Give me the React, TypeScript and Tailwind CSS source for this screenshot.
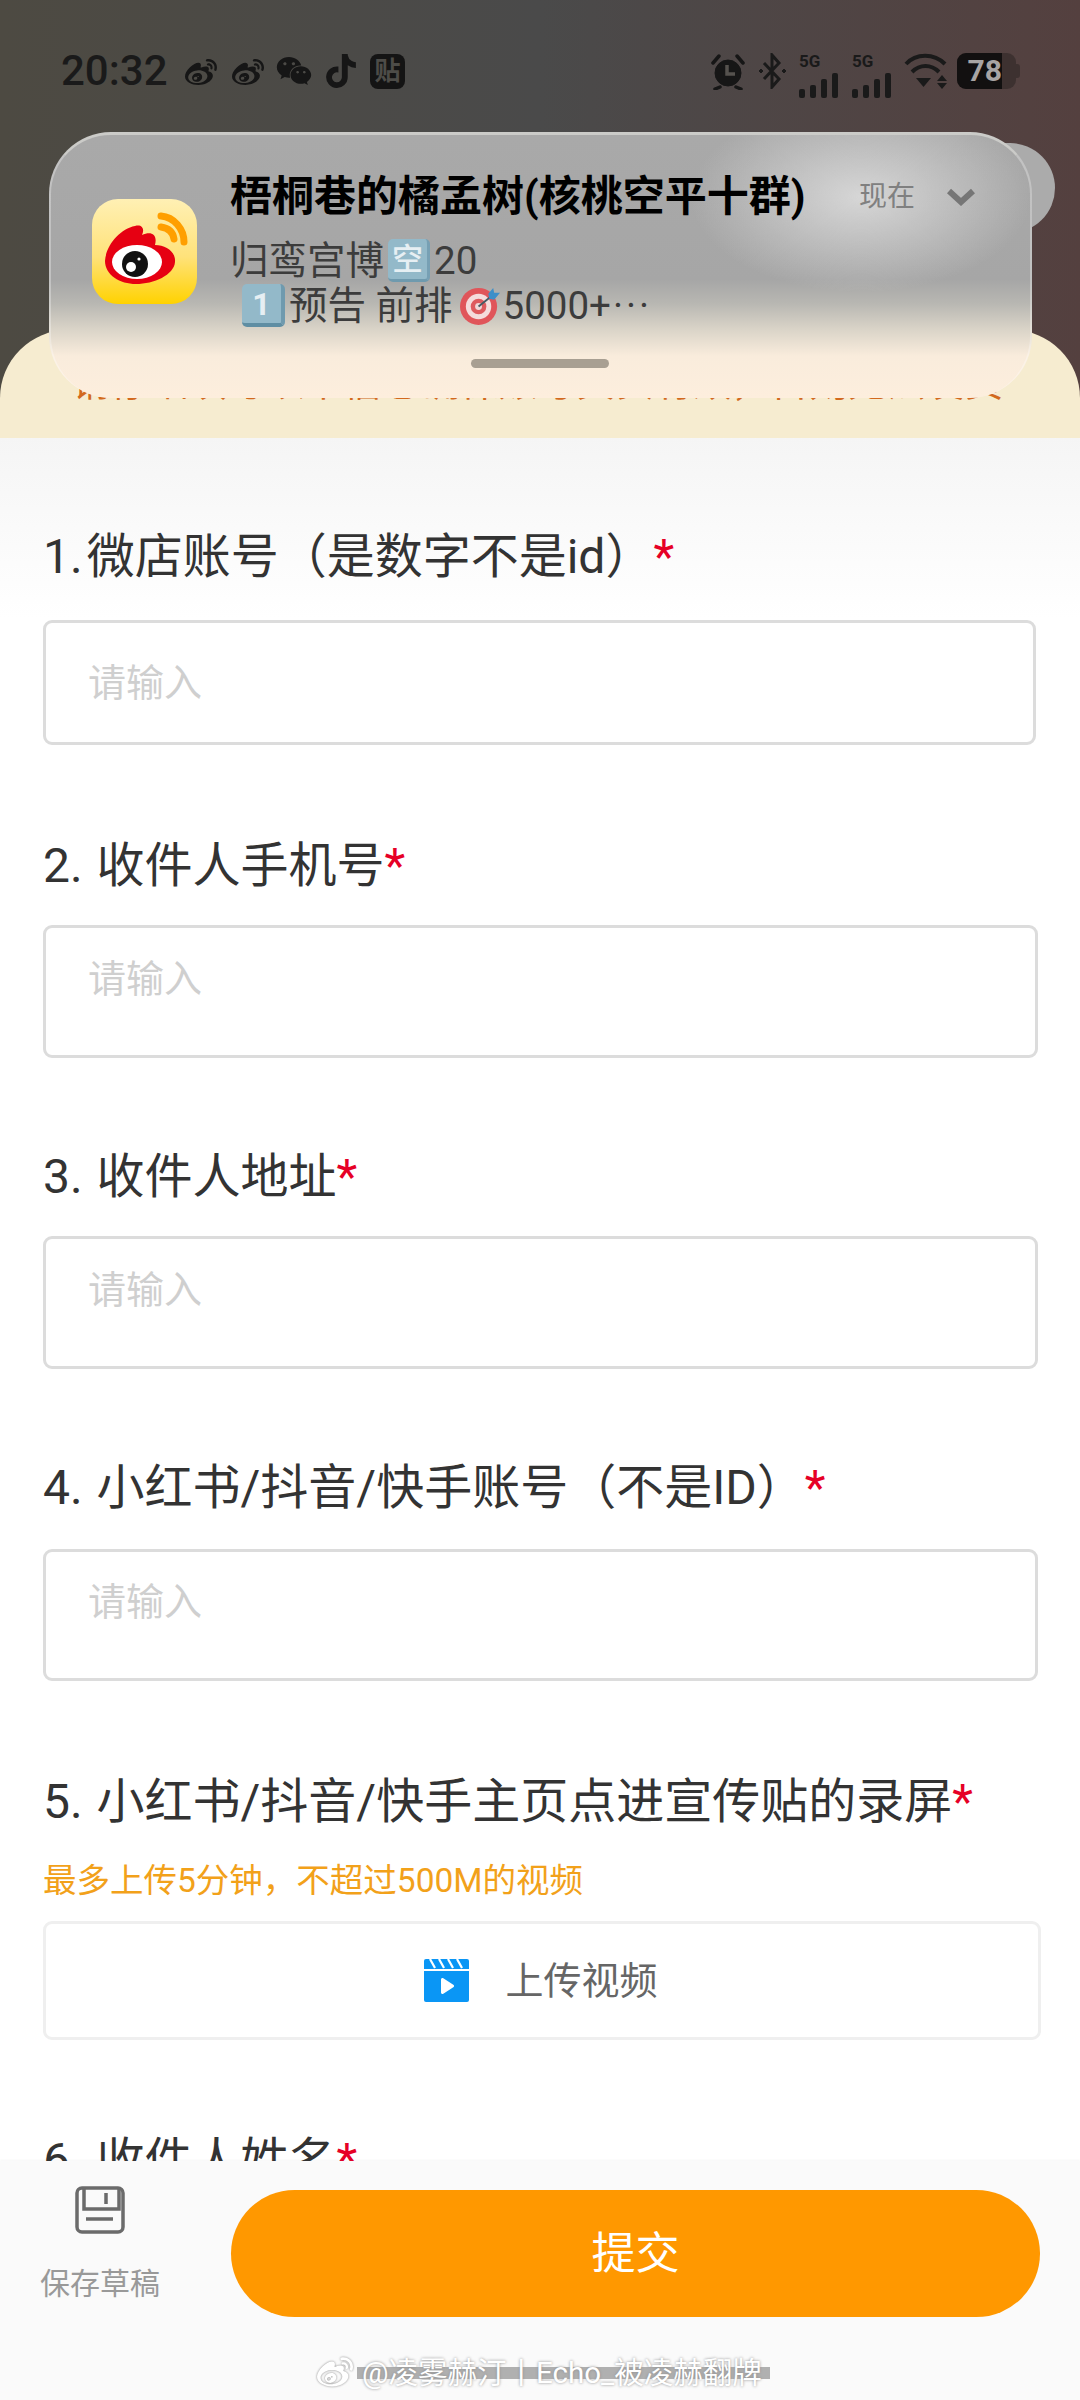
import { FaWeibo, FaWeixin, FaTiktok } from "react-icons/fa";

function Signal() {
  return (
    <div className="flex w-[41px] flex-col">
      <span className="h-[17px] text-[17px] leading-[17px] font-bold text-[#1a1a1a]">5G</span>
      <div className="mt-[3px] flex h-[25px] items-end gap-[5px]">
        <span className="h-[9px] w-[6px] rounded-[2px] bg-[#1a1a1a]" />
        <span className="h-[13px] w-[6px] rounded-[2px] bg-[#1a1a1a]" />
        <span className="h-[19px] w-[6px] rounded-[2px] bg-[#1a1a1a]" />
        <span className="h-[25px] w-[6px] rounded-[2px] bg-[#1a1a1a]" />
      </div>
    </div>
  );
}

function StatusBar() {
  return (
    <div className="flex h-[140px] items-start justify-between pt-[53px] pr-[60px] pl-[61px]">
      <div className="flex h-[36px] items-center">
        <span className="w-[122px] text-[42px] leading-[36px] font-medium text-[#1a1a1a]">20:32</span>
        <FaWeibo className="mt-[3px] h-[32px] w-[36px] text-[#161616]" />
        <FaWeibo className="mt-[3px] ml-[11px] h-[32px] w-[36px] text-[#161616]" />
        <FaWeixin className="ml-[10px] h-[36px] w-[36px] text-[#161616]" />
        <FaTiktok className="ml-[14px] h-[34px] w-[30px] text-[#161616]" />
        <span className="ml-[14px] flex h-[35px] w-[35px] items-center justify-center rounded-[8px] bg-[#141414] text-[26px] leading-none font-bold text-[#4d4c48]">
          贴
        </span>
      </div>
      <div className="flex h-[36px] items-start">
        <svg viewBox="0 0 36 37" className="h-[37px] w-[36px]" fill="none" stroke="#161616">
          <circle cx="18" cy="20" r="13" fill="#161616" />
          <path d="M10 34l-5 2M26 34l5 2M3 10l6-7M33 10l-6-7" strokeWidth="3.5" strokeLinecap="round" />
          <path d="M17 12v9h8" stroke="#55524e" strokeWidth="3.5" />
        </svg>
        <svg viewBox="0 0 29 36" className="ml-[12px] h-[36px] w-[29px]" fill="none" stroke="#1a1a1a" strokeWidth="3">
          <path d="M6 10l15 16-7 8V2l7 8L6 26" />
          <path d="M1 18l2-2 2 2-2 2zM24 18l2-2 2 2-2 2z" fill="#1a1a1a" strokeWidth="1" />
        </svg>
        <div className="ml-[12px]">
          <Signal />
        </div>
        <div className="ml-[12px]">
          <Signal />
        </div>
        <svg viewBox="0 0 44 36" className="ml-[11px] h-[36px] w-[44px]" fill="none" stroke="#1a1a1a" strokeWidth="4">
          <path d="M2 11C12 0 30 0 41 11" />
          <path d="M8 19C16 11 27 11 35 19" />
          <path d="M12 25h15l-7.500 9z" fill="#1a1a1a" stroke="none" />
          <path d="M38 22l5 6H33zM38 36l5-6H33z" fill="#1a1a1a" stroke="none" />
        </svg>
        <div className="ml-[9px] flex h-[36px] items-center">
          <div className="flex h-[36px] w-[59px] overflow-hidden rounded-[9px] bg-[#3d3130]">
            <span className="flex w-[45px] items-center justify-end bg-[#121010] text-[30px] leading-none font-bold text-[#a8a4a3]">
              78
            </span>
          </div>
          <span className="h-[14px] w-[4px] rounded-r-[3px] bg-[#3d3130]" />
        </div>
      </div>
    </div>
  );
}

function WeiboAppIcon() {
  return (
    <div className="mt-[24px] h-[105px] w-[105px] shrink-0 rounded-[26px] bg-[linear-gradient(#fff0b4,#ffe27a_55%,#ffd200)]">
      <svg viewBox="0 0 105 105" className="h-full w-full" fill="none">
        <path
          d="M13 62C14 46 28 30 43 27C50 25 53 30 50 36C58 32 66 34 63 46C74 46 84 53 83 63C82 76 62 85 44 85C28 85 13 76 13 62Z"
          fill="#e60012"
        />
        <ellipse cx="45" cy="63" rx="25" ry="17" fill="#fff" />
        <circle cx="43" cy="65" r="13" fill="#111" />
        <circle cx="39" cy="68" r="5" fill="#fff" />
        <circle cx="47" cy="60" r="1.6" fill="#fff" />
        <path d="M69 17C82 18 92 30 92 43" stroke="#ff9f00" strokeWidth="7" strokeLinecap="round" />
        <path d="M69 28C76 29 81 33 82 40" stroke="#ff9f00" strokeWidth="7" strokeLinecap="round" />
      </svg>
    </div>
  );
}

function Target() {
  return (
    <svg viewBox="0 0 42 42" className="ml-[7px] h-[41px] w-[41px] shrink-0">
      <circle cx="19" cy="22" r="19" fill="#e0555a" />
      <circle cx="19" cy="22" r="13" fill="#f4dcdc" />
      <circle cx="19" cy="22" r="8" fill="#de5a5e" />
      <circle cx="19" cy="22" r="3.5" fill="#f0d8d8" />
      <path d="M19 22L34 10" stroke="#455a64" strokeWidth="2" />
      <path d="M29 9l5-6 1 5 6 0-6 7-5-1z" fill="#3d8fc9" />
    </svg>
  );
}

function NotificationCard() {
  return (
    <>
      <div className="absolute top-[143px] left-[854px] h-[90px] w-[201px] rounded-full bg-[#ababab]" />
      <div className="absolute top-[132px] left-[49px] h-[266px] w-[983px] rounded-[62px] border-x-2 border-t-[3px] border-x-white/30 border-t-[#cbcbc8] bg-[radial-gradient(ellipse_170px_95px_at_810px_62px,#d6d6d6,#d6d6d600),linear-gradient(#a9a9a9,#a6a6a6_55%,#b8b7b2_64%,#dad4c8_74%,#f9ecdc_84%,#fdeedd)] pt-[40px] pl-[41px]">
        <div className="flex">
          <WeiboAppIcon />
          <div className="ml-[33px] flex-1">
            <div className="-mt-[1px] flex h-[46px] items-center">
              <span className="w-[629px] text-[42px] leading-[46px] font-bold whitespace-nowrap text-black">梧桐巷的橘孟树(核桃空平十群)</span>
              <span className="text-[28px] leading-[46px] text-[#808080]">现在</span>
              <svg viewBox="0 0 28 18" className="ml-[32px] h-[18px] w-[28px]" fill="none" stroke="#767676" strokeWidth="6">
                <path d="M2 3l12 11L26 3" />
              </svg>
            </div>
            <div className="mt-[18px] flex h-[45px] items-center text-[38.5px] leading-[45px] text-[#3c3c3c]">
              归鸾宫博
              <span className="mx-[4px] flex h-[43px] w-[42px] items-center justify-center rounded-[5px] border-r-[3px] border-b-[3px] border-r-[#77a0b4] border-b-[#6f9aae] bg-[#93b9c9] text-[31px] leading-none font-medium text-[#e6eff3]">
                空
              </span>
              <span>20</span>
            </div>
            <div className="flex h-[45px] items-center text-[38.5px] leading-[45px] text-[#3c3c3c]">
              <span className="mr-[4px] ml-[12px] flex h-[43px] w-[43px] items-center justify-center rounded-[5px] border-r-[4px] border-b-[4px] border-r-[#6f9aae] border-b-[#5f8ea3] bg-[#93b9c9] text-[32px] leading-none font-bold text-[#e6eff3]">
                1
              </span>
              预告 前排
              <Target />
              <span className="ml-[2px]">5000+</span>
              <span className="ml-[2px] tracking-[3px]">···</span>
            </div>
          </div>
        </div>
        <div className="mt-[31px] ml-[379px] h-[9px] w-[138px] rounded-full bg-[#a89f92]" />
      </div>
    </>
  );
}

function Star() {
  return <span className="text-[#e60026]">*</span>;
}

function Placeholder() {
  return <span className="text-[38px] leading-[50px] text-[#cfcfcf]">请输入</span>;
}

export default function App() {
  return (
    <div className="relative h-[2400px] w-[1080px] overflow-hidden bg-white font-['Roboto','Noto_Sans_CJK_SC',sans-serif]">
      {/* Top of the page behind the banner */}
      <div className="flex h-[438px] flex-col bg-[linear-gradient(90deg,#4d4a42,#4a4a4a_50%,#54403f)]">
        <StatusBar />
        <div className="mt-[190px] h-[108px] rounded-t-[68px] bg-[#f6ecd0] pt-[30px] pl-[72px]">
          <p className="text-[38.8px] leading-[45px] whitespace-nowrap text-[#d2691e]">请仔细填写以下信息确保账号真实有效，否则无法发货</p>
        </div>
      </div>

      {/* Form */}
      <div className="h-[1962px] bg-[linear-gradient(#f5f5f5,#ffffff_180px)] pt-[89px] pl-[43px] text-[48px] leading-[60px] text-[#333]">
        <p>
          <span className="mr-[4px]">1.</span>微店账号（是数字不是id）
          <Star />
        </p>
        <div className="mt-[33px] h-[125px] w-[993px] rounded-[9px] border-[3px] border-[#dcdcdc] pt-[27px] pl-[42px]">
          <Placeholder />
        </div>

        <p className="mt-[91px]">
          <span className="mr-[2px]">2. </span>收件人手机号
          <Star />
        </p>
        <div className="mt-[29px] h-[133px] w-[995px] rounded-[9px] border-[3px] border-[#dcdcdc] pt-[18px] pl-[42px]">
          <Placeholder />
        </div>

        <p className="mt-[89px]">
          <span className="mr-[2px]">3. </span>收件人地址
          <Star />
        </p>
        <div className="mt-[29px] h-[133px] w-[995px] rounded-[9px] border-[3px] border-[#dcdcdc] pt-[18px] pl-[42px]">
          <Placeholder />
        </div>

        <p className="mt-[89px]">
          <span className="mr-[2px]">4. </span>小红书/抖音/快手账号（不是ID）
          <Star />
        </p>
        <div className="mt-[31px] h-[132px] w-[995px] rounded-[9px] border-[3px] border-[#dcdcdc] pt-[17px] pl-[42px]">
          <Placeholder />
        </div>

        <p className="mt-[91px]">
          <span className="mr-[2px]">5. </span>小红书/抖音/快手主页点进宣传贴的录屏
          <Star />
        </p>
        <p className="mt-[29px] text-[33.5px] leading-[40px] text-[#f2a11a]">最多上传5分钟，不超过500M的视频</p>
        <div className="mt-[20px] flex h-[119px] w-[998px] items-center justify-center rounded-[9px] border-[3px] border-[#efefef]">
          <svg viewBox="0 0 45 43" className="h-[43px] w-[45px]">
            <path d="M2 0h41a2 2 0 0 1 2 2v8H0V2a2 2 0 0 1 2-2z" fill="#0a96f5" />
            <path d="M6 0l5 9M15 0l5 9M24 0l5 9M33 0l5 9" stroke="#fff" strokeWidth="2.2" />
            <path d="M0 12h45v29a2 2 0 0 1-2 2H2a2 2 0 0 1-2-2z" fill="#0a96f5" />
            <path d="M17 20.500c0-1.200 1.200-2 2.300-1.300l10 6.500c1 .6 1 2 0 2.600l-10 6.500c-1.100.7-2.300-.1-2.300-1.300z" fill="#fff" />
          </svg>
          <span className="mr-[2px] ml-[36px] text-[38px] leading-[50px] text-[#666]">上传视频</span>
        </div>

        <p className="mt-[91px]">
          <span className="mr-[2px]">6. </span>收件人姓名
          <Star />
        </p>
      </div>

      <NotificationCard />

      {/* Bottom action bar */}
      <div className="absolute top-[2161px] left-0 flex h-[239px] w-[1080px] bg-[#fafafa] shadow-[0_-1px_2px_rgba(0,0,0,0.04)]">
        <div className="flex w-[231px] flex-col pt-[25px] pl-[40px]">
          <svg viewBox="0 0 50 48" className="ml-[35px] h-[48px] w-[50px]" fill="none" stroke="#6b6b6b" strokeWidth="3.5">
            <rect x="2" y="2" width="46" height="44" rx="5" />
            <path d="M9 2v21h35V2" />
            <path d="M31 7v11M11 33h27" />
          </svg>
          <span className="mt-[27px] text-[30px] leading-[46px] whitespace-nowrap text-[#999]">保存草稿</span>
        </div>
        <div className="mt-[29px] flex h-[127px] w-[809px] items-center justify-center rounded-full bg-[#ff9800] text-[44px] leading-none text-white">
          提交
        </div>
      </div>

      {/* Weibo watermark */}
      <div className="absolute top-[2354px] left-[315px] flex h-[38px] items-center">
        <FaWeibo className="h-[36px] w-[40px] text-white drop-shadow-[0_0_1px_#888]" />
        <div className="relative ml-[7px]">
          <div className="absolute top-[13px] left-[-5px] h-[12px] w-[413px] bg-[#b0b0b0]" />
          <span className="relative text-[29.5px] leading-[38px] whitespace-nowrap text-white [text-shadow:0_0_3px_#8a8a8a]">
            @凌雾赫汀丨Echo_被凌赫翻牌
          </span>
        </div>
      </div>
    </div>
  );
}
